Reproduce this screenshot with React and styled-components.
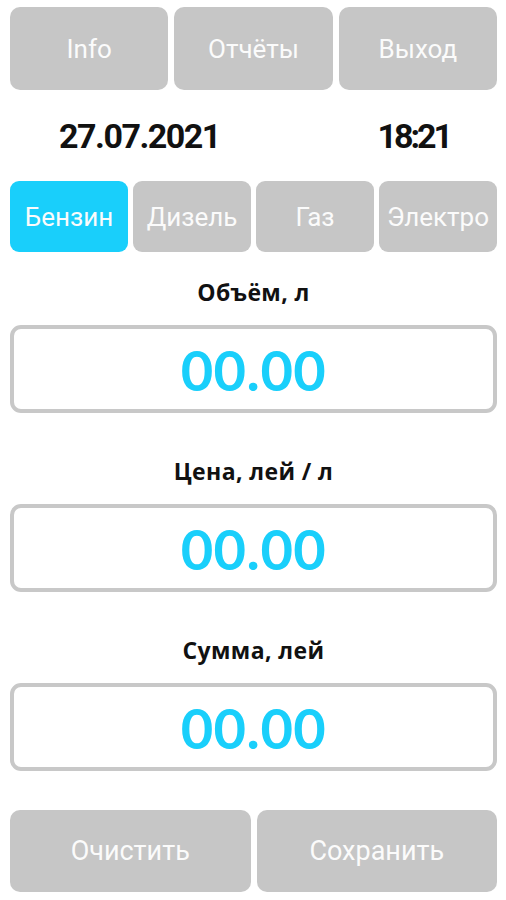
import React, { useState } from 'react';
import styled, { createGlobalStyle } from 'styled-components';

const GlobalStyle = createGlobalStyle`
    body {
        margin: 0;
        background: #ffffff;
        font-family: Roboto, "Liberation Sans", sans-serif;
    }
`;

const Screen = styled.div`
    width: 506px;
    box-sizing: border-box;
    padding: 7px 9px 0 10px;
    display: flex;
    flex-direction: column;
`;

const TopBar = styled.div`
    display: grid;
    grid-template-columns: repeat(3, 1fr);
    gap: 6px;
    height: 83px;
`;

const GrayButton = styled.button`
    display: flex;
    align-items: center;
    justify-content: center;
    border: none;
    border-radius: 10px;
    background-color: #c6c6c6;
    color: #fbfbfb;
    font-family: Roboto, "Liberation Sans", sans-serif;
    font-size: ${props => props.$size || 26}px;
    font-weight: 400;
    padding: 0;
    cursor: pointer;
    outline: none;
`;

const DateRow = styled.div`
    height: 91px;
    display: flex;
    align-items: center;
    justify-content: space-between;
    padding: 0 47px 0 49px;
    font-family: Roboto, "Liberation Sans", sans-serif;
    font-weight: 700;
    font-size: 34px;
    letter-spacing: -1.5px;
    color: #111111;
`;

const Clock = styled.span`
    letter-spacing: -3px;
`;

const Tabs = styled.div`
    display: grid;
    grid-template-columns: repeat(4, 1fr);
    gap: 5px;
    height: 71px;
`;

const Tab = styled.button`
    display: flex;
    align-items: center;
    justify-content: center;
    border: none;
    border-radius: 9px;
    padding: 0;
    background-color: ${props => (props.$active ? '#19cffb' : '#c6c6c6')};
    color: #fbfbfb;
    font-family: Roboto, "Liberation Sans", sans-serif;
    font-size: 26px;
    white-space: nowrap;
    cursor: pointer;
    outline: none;
`;

const Fields = styled.div`
    margin-top: 28px;
    display: flex;
    flex-direction: column;
    gap: 46px;
`;

const Field = styled.div`
    display: flex;
    flex-direction: column;
`;

const Label = styled.div`
    height: 24px;
    line-height: 24px;
    margin-bottom: 21px;
    text-align: center;
    font-family: "Open Sans", "Liberation Sans", sans-serif;
    font-weight: 700;
    font-size: 23px;
    letter-spacing: 0.4px;
    color: #111111;
`;

const ValueBox = styled.div`
    height: 88px;
    box-sizing: border-box;
    border: 4px solid #c8c8c8;
    border-radius: 11px;
    display: flex;
    align-items: center;
    justify-content: center;
    font-family: Lato, "Open Sans", sans-serif;
    font-weight: 700;
    font-size: 56px;
    letter-spacing: 0.5px;
    color: #19cffb;
`;

const BottomBar = styled.div`
    margin-top: 39px;
    display: grid;
    grid-template-columns: repeat(2, 1fr);
    gap: 6px;
    height: 82px;
`;

const fuels = ['Бензин', 'Дизель', 'Газ', 'Электро'];
const fields = ['Объём, л', 'Цена, лей / л', 'Сумма, лей'];

export default function App() {
    const [fuel, setFuel] = useState('Бензин');

    return (
        <>
            <GlobalStyle />
            <Screen>
                <TopBar>
                    <GrayButton>Info</GrayButton>
                    <GrayButton>Отчёты</GrayButton>
                    <GrayButton>Выход</GrayButton>
                </TopBar>
                <DateRow>
                    <span>27.07.2021</span>
                    <Clock>18:21</Clock>
                </DateRow>
                <Tabs>
                    {fuels.map(f => (
                        <Tab key={f} $active={f === fuel} onClick={() => setFuel(f)}>{f}</Tab>
                    ))}
                </Tabs>
                <Fields>
                    {fields.map(label => (
                        <Field key={label}>
                            <Label>{label}</Label>
                            <ValueBox>00.00</ValueBox>
                        </Field>
                    ))}
                </Fields>
                <BottomBar>
                    <GrayButton $size={27}>Очистить</GrayButton>
                    <GrayButton $size={27}>Сохранить</GrayButton>
                </BottomBar>
            </Screen>
        </>
    );
}
